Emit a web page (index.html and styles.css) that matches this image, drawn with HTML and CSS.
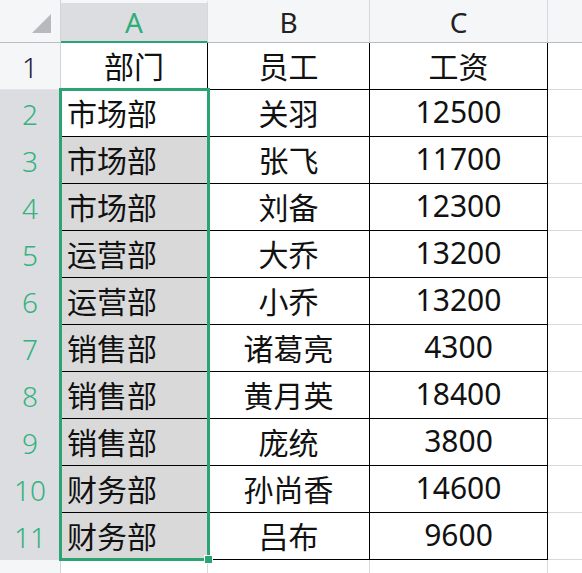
FILE: index.html
```html
<!DOCTYPE html>
<html lang="zh-CN">
<head>
<meta charset="utf-8">
<link rel="stylesheet" href="styles.css">
</head>
<body>
<div class="sheet">
  <div class="corner"><span class="tri"></span></div>
  <div class="ch sel">A</div>
  <div class="ch">B</div>
  <div class="ch">C</div>
  <div class="ch end"></div>

  <div class="rh">1</div>
  <div class="c ca">部门</div><div class="c">员工</div><div class="c">工资</div><div class="g"></div>

  <div class="rh on">2</div>
  <div class="c ca left">市场部</div><div class="c">关羽</div><div class="c">12500</div><div class="g"></div>
  <div class="rh on">3</div>
  <div class="c ca left hl">市场部</div><div class="c">张飞</div><div class="c">11700</div><div class="g"></div>
  <div class="rh on">4</div>
  <div class="c ca left hl">市场部</div><div class="c">刘备</div><div class="c">12300</div><div class="g"></div>
  <div class="rh on">5</div>
  <div class="c ca left hl">运营部</div><div class="c">大乔</div><div class="c">13200</div><div class="g"></div>
  <div class="rh on">6</div>
  <div class="c ca left hl">运营部</div><div class="c">小乔</div><div class="c">13200</div><div class="g"></div>
  <div class="rh on">7</div>
  <div class="c ca left hl">销售部</div><div class="c">诸葛亮</div><div class="c">4300</div><div class="g"></div>
  <div class="rh on">8</div>
  <div class="c ca left hl">销售部</div><div class="c">黄月英</div><div class="c">18400</div><div class="g"></div>
  <div class="rh on">9</div>
  <div class="c ca left hl">销售部</div><div class="c">庞统</div><div class="c">3800</div><div class="g"></div>
  <div class="rh on">10</div>
  <div class="c ca left hl">财务部</div><div class="c">孙尚香</div><div class="c">14600</div><div class="g"></div>
  <div class="rh on">11</div>
  <div class="c ca left hl">财务部</div><div class="c">吕布</div><div class="c">9600</div><div class="g"></div>

  <div class="rh last"></div>
  <div class="e"></div><div class="e"></div><div class="e"></div><div class="e end"></div>

  <div class="selection"><span class="handle"></span></div>
</div>
</body>
</html>
```

FILE: styles.css
```css
html, body {
  margin: 0;
  padding: 0;
  background: #ffffff;
}

.sheet {
  position: relative;
  width: 582px;
  height: 573px;
  overflow: hidden;
  display: grid;
  grid-template-columns: 61px 147px 162px 178px 1fr;
  grid-template-rows: 43px repeat(11, 47px) 1fr;
  font-family: "Noto Sans", "Noto Sans CJK SC", sans-serif;
  color: #111111;
}

.corner {
  position: relative;
  background: #f5f6f8;
  border-right: 1px solid #d2d4d8;
  border-bottom: 1px solid #b9bbbf;
  box-sizing: border-box;
}

.tri {
  position: absolute;
  left: 32px;
  top: 14px;
  width: 0;
  height: 0;
  border-left: 19px solid transparent;
  border-bottom: 19px solid #b8b9bc;
}

.ch {
  box-sizing: border-box;
  background: #f5f6f8;
  border-right: 1px solid #d6d8dc;
  border-bottom: 1px solid #b9bbbf;
  display: flex;
  align-items: center;
  justify-content: center;
  font-size: 28px;
  color: #222222;
  padding-top: 2px;
}

.ch.sel {
  background: #dcdde1;
  color: #2fae7a;
  border-top: 3px solid #f5f6f8;
  border-bottom: 2px solid #2aa572;
  padding-top: 0;
}

.ch.end {
  border-right: none;
}

.rh {
  box-sizing: border-box;
  background: #f5f6f8;
  border-right: 1px solid #d2d4d8;
  border-bottom: 1px solid #e3e4e7;
  display: flex;
  align-items: center;
  justify-content: center;
  font-size: 28px;
  font-weight: 300;
  color: #22203a;
  padding-top: 2px;
}

.rh.on {
  background: #dcdde1;
  color: #35b27f;
  border-bottom-color: #dcdde1;
}

.rh.last {
  border-bottom: none;
}

.c {
  box-sizing: border-box;
  border-right: 1px solid #000000;
  border-bottom: 1px solid #000000;
  display: flex;
  align-items: center;
  justify-content: center;
  font-size: 30px;
  white-space: nowrap;
  padding-bottom: 3px;
}

.c.left {
  justify-content: flex-start;
  padding-left: 6px;
}

.c.hl {
  background: #d9d9d9;
}

.g {
  box-sizing: border-box;
  border-bottom: 1px solid #d9d9d9;
}

.e {
  box-sizing: border-box;
  border-right: 1px solid #d9d9d9;
}

.e.end {
  border-right: none;
}

.selection {
  position: absolute;
  left: 59px;
  top: 88px;
  width: 151px;
  height: 473px;
  box-sizing: border-box;
  border: 3px solid #2aa572;
  pointer-events: none;
}

.handle {
  position: absolute;
  right: -6px;
  bottom: -6px;
  width: 7px;
  height: 7px;
  background: #2aa572;
  border: 1px solid #ffffff;
}
```
